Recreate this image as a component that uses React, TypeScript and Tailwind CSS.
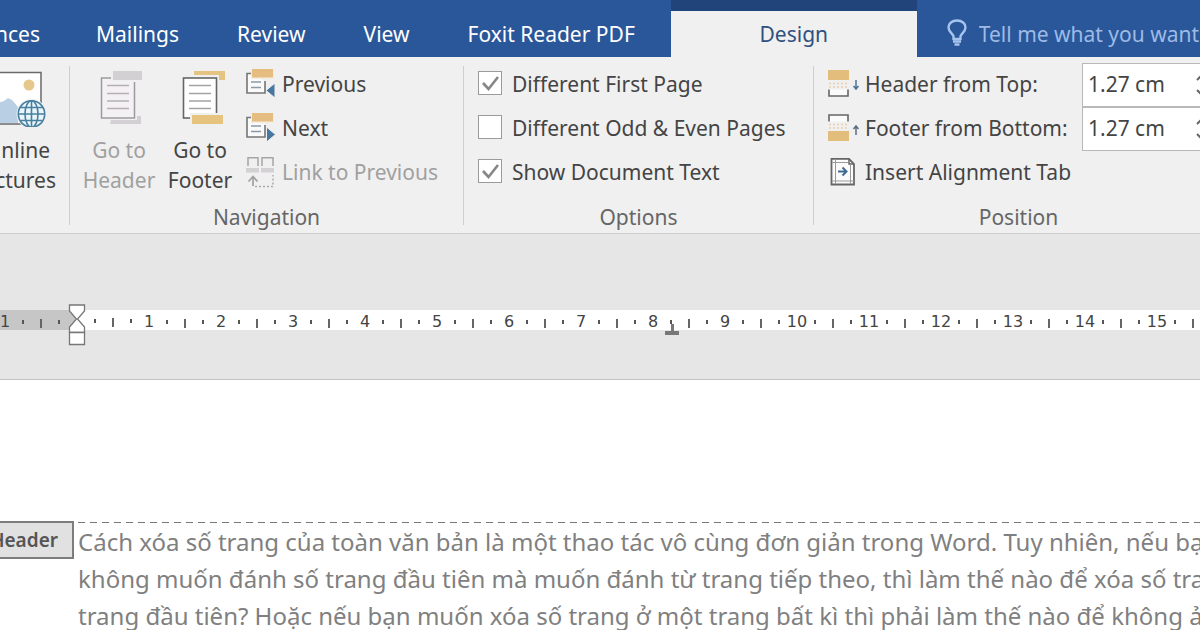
import React, { useState } from 'react';

const TABS = ['nces', 'Mailings', 'Review', 'View', 'Foxit Reader PDF'];

// Ruler numbers from left to right; null is the spot of the indent marker
const RULER_MARKS: (number | null)[] = [1, null, 1, 2, 3, 4, 5, 6, 7, 8, 9, 10, 11, 12, 13, 14, 15];

const BODY_LINES = [
  'Cách xóa số trang của toàn văn bản là một thao tác vô cùng đơn giản trong Word. Tuy nhiên, nếu bạ',
  'không muốn đánh số trang đầu tiên mà muốn đánh từ trang tiếp theo, thì làm thế nào để xóa số tra',
  'trang đầu tiên? Hoặc nếu bạn muốn xóa số trang ở một trang bất kì thì phải làm thế nào để không ả',
];

function OnlinePicturesIcon() {
  return (
    <svg width="46" height="60" viewBox="0 0 46 60" fill="none" aria-hidden="true">
      <path d="M-2 5.5H41V57H-2Z" fill="#fff" stroke="#6a6a6a" strokeWidth="1.5" />
      <circle cx="29" cy="18" r="5.5" fill="#e6c78c" />
      <path d="M-2 36L4 34L8 31L12 33L18 40V56H-2Z" fill="#b9cfe4" />
      <circle cx="31.5" cy="47" r="15" fill="#f0f0f0" />
      <g stroke="#47809f" strokeWidth="1.6">
        <circle cx="31.5" cy="47" r="13.2" fill="#e9f5fb" />
        <ellipse cx="31.5" cy="47" rx="6.5" ry="13.2" />
        <path d="M18.3 47H44.7M31.5 33.8V60M20.5 40.5H42.5M20.5 53.5H42.5" />
      </g>
    </svg>
  );
}

function GoToHeaderIcon() {
  return (
    <svg width="42" height="60" viewBox="0 0 42 60" fill="none" className="ml-1" aria-hidden="true">
      <path d="M11 53H37V49H41V57H10Z" fill="#d2d0d2" />
      <rect x="1.5" y="11" width="33" height="40" fill="#f4f1f5" stroke="#9c9a9d" strokeWidth="1.5" />
      <path d="M7 18.5H29M7 26.5H29M7 34H29M7 41.5H29" stroke="#b3b0b4" strokeWidth="1.5" />
      <rect x="11" y="2" width="33" height="13" fill="#f0f0f0" />
      <rect x="13" y="4" width="29" height="9" fill="#d2d0d2" />
    </svg>
  );
}

function GoToFooterIcon() {
  return (
    <svg width="44" height="60" viewBox="0 0 44 60" fill="none" className="ml-2" aria-hidden="true">
      <path d="M12 4H43V13H37V8H12Z" fill="#e3c482" />
      <rect x="1.5" y="11" width="33" height="40" fill="#fff" stroke="#666" strokeWidth="1.6" />
      <path d="M7 18.5H29M7 26.5H29M7 34H29M7 41.5H29" stroke="#a3a3a3" strokeWidth="1.5" />
      <rect x="8" y="46" width="34" height="13" fill="#f0f0f0" />
      <rect x="10" y="48" width="31" height="9" fill="#e6c37f" />
    </svg>
  );
}

function StepIcon({ direction }: { direction: 'previous' | 'next' }) {
  return (
    <svg width="30" height="32" viewBox="0 0 30 32" fill="none" aria-hidden="true">
      <path d="M5 4.5H1V24H19V12" fill="#fafafa" stroke="#757575" strokeWidth="1.6" />
      <path d="M5 13H15M5 18.5H15" stroke="#8c9aa8" strokeWidth="1.5" />
      <rect x="5" y="-1" width="23" height="11" fill="#f3ece0" />
      <rect x="6" y="0" width="21" height="8.5" fill="#e5bd80" />
      {direction === 'previous' ? (
        <path d="M29 14V29L20 21.5Z" fill="#48779f" stroke="#f0f0f0" />
      ) : (
        <path d="M20.5 14V29L29.5 21.5Z" fill="#48779f" stroke="#f0f0f0" />
      )}
    </svg>
  );
}

function LinkIcon() {
  return (
    <svg width="30" height="32" viewBox="0 0 30 32" fill="none" aria-hidden="true">
      <path d="M2 9V0.8H12V9M16 9V0.8H27V9" stroke="#a5a5a5" strokeWidth="1.5" />
      <path d="M0 11H13V15.5H0ZM15 11H28V15.5H15Z" fill="#d3d1d3" />
      <path d="M7 29V20M2.5 24.5L7 19.5L11.5 24.5" stroke="#a0a0a0" strokeWidth="1.7" />
      <path d="M9 29.5H27V18" stroke="#aaa" strokeWidth="1.5" strokeDasharray="2 2" />
    </svg>
  );
}

function EdgeIcon({ edge }: { edge: 'top' | 'bottom' }) {
  return (
    <svg width="32" height="30" viewBox="0 0 32 30" fill="none" aria-hidden="true">
      {edge === 'top' ? (
        <>
          <rect y="0" width="21" height="10" fill="#e2bd7c" />
          <path d="M1 13.5H21M1 17H21" stroke="#ebcfae" strokeWidth="1.5" strokeDasharray="2 2" />
          <path d="M1 19.5V26H20V19.5" fill="#fafafa" stroke="#666" strokeWidth="1.6" />
          <path d="M28 10V19M25.5 16L28 19L30.5 16" stroke="#4d7495" strokeWidth="1.5" />
        </>
      ) : (
        <>
          <path d="M1 7.5V1H20V7.5" fill="#fafafa" stroke="#666" strokeWidth="1.6" />
          <path d="M1 10.5H21M1 14H21" stroke="#ebcfae" strokeWidth="1.5" strokeDasharray="2 2" />
          <rect y="17" width="21" height="10" fill="#e2bd7c" />
          <path d="M28 21V12M25.5 15L28 12L30.5 15" stroke="#5c6f80" strokeWidth="1.5" />
        </>
      )}
    </svg>
  );
}

function AlignmentTabIcon() {
  return (
    <svg width="32" height="30" viewBox="0 0 32 30" fill="none" aria-hidden="true">
      <path d="M3.5 0.9H21L26 6V26.5H3.5Z" fill="#fbfbfb" stroke="#666" strokeWidth="1.8" />
      <path d="M21 1V6H26" stroke="#666" strokeWidth="1.5" />
      <path d="M7.5 1V26M22.5 7V26M4 4.5H20M4 23H26" stroke="#999" strokeWidth="1" />
      <path d="M10 13.5H18M14.5 9.5L18.5 13.5L14.5 17.5" stroke="#416c92" strokeWidth="2" />
    </svg>
  );
}

function BulbIcon() {
  return (
    <svg width="20" height="28" viewBox="0 0 20 28" fill="none" stroke="#a6c4ee" strokeWidth="2.4" aria-hidden="true">
      <path d="M6.5 20V17.5C6.5 15 1.5 13 1.5 8.5C1.5 4.5 5 1.5 10 1.5S18.5 4.5 18.5 8.5C18.5 13 13.5 15 13.5 17.5V20Z" />
      <path d="M6 22.5H14M7.5 25.5H12.5" />
    </svg>
  );
}

function Group({ label, className, children }: { label: string; className: string; children: React.ReactNode }) {
  return (
    <section aria-label={label || 'Insert'} className={`flex shrink-0 flex-col ${className}`}>
      <div className="flex h-[132px]">{children}</div>
      <div className="mt-2 text-center leading-7 text-[#666]">{label}</div>
    </section>
  );
}

function Separator() {
  return <div className="mb-[6px] mt-[3px] w-px shrink-0 bg-[#cfcfcf]" />;
}

function CheckOption({ label, initial }: { label: string; initial: boolean }) {
  const [checked, setChecked] = useState(initial);

  return (
    <label className="flex h-11 items-center gap-[10px] whitespace-nowrap">
      <span className="relative mb-1 flex">
        <input
          type="checkbox"
          checked={checked}
          onChange={(e) => setChecked(e.target.checked)}
          className="size-6 appearance-none border border-[#9b9b9b] bg-white"
        />
        {checked && (
          <svg viewBox="0 0 24 24" className="pointer-events-none absolute inset-0 size-6" fill="none" aria-hidden="true">
            <path d="M5 12L10.5 18L20 6" stroke="#868686" strokeWidth="2.6" />
          </svg>
        )}
      </span>
      {label}
    </label>
  );
}

function DistanceField({ id, label, edge }: { id: string; label: string; edge: 'top' | 'bottom' }) {
  const [value, setValue] = useState('1.27 cm');

  return (
    <div className="flex h-11 items-center">
      <label htmlFor={id} className="flex w-[254px] items-center gap-[5px] whitespace-nowrap">
        <EdgeIcon edge={edge} />
        {label}
      </label>
      <div className="flex h-11 w-[140px] items-center border border-[#b8b8b8] bg-white">
        <input
          id={id}
          value={value}
          onChange={(e) => setValue(e.target.value)}
          className="w-[112px] bg-transparent pl-[5px] outline-none"
        />
        <button type="button" aria-label="Change distance">
          <svg width="14" height="24" viewBox="0 0 14 24" fill="none" stroke="#666" strokeWidth="2" aria-hidden="true">
            <path d="M2 7L7 2L12 7M2 17L7 22L12 17" />
          </svg>
        </button>
      </div>
    </div>
  );
}

function TitleTabs() {
  return (
    <nav className="flex h-[57px] overflow-hidden bg-[#2a579a] text-[21px] text-white">
      <div className="flex pt-3">
        {TABS.map((tab) => (
          <button
            key={tab}
            type="button"
            className="flex shrink-0 items-center justify-end whitespace-nowrap px-[29px] first:w-[67px] first:pl-0 first:pr-[27px] last:pr-9"
          >
            {tab}
          </button>
        ))}
      </div>
      <div className="flex w-[246px] shrink-0 border-t-[11px] border-[#21457b] bg-[#f0f0f0]">
        <button type="button" className="flex-1 pt-px text-[#2f5180]">
          Design
        </button>
      </div>
      <label className="flex flex-1 items-center gap-3 overflow-hidden pl-[30px] pt-3">
        <span className="mb-1 shrink-0">
          <BulbIcon />
        </span>
        <input
          aria-label="Tell me"
          placeholder="Tell me what you want"
          className="w-60 shrink-0 bg-transparent outline-none placeholder:text-[#9dbbe6]"
        />
      </label>
    </nav>
  );
}

function Ribbon() {
  return (
    <div className="flex overflow-hidden border-b border-[#cdcdcd] bg-[#f0f0f0] pb-[2px] pt-[6px] text-[21px] text-[#444]">
      <Group label="" className="w-[69px]">
        <button type="button" className="flex flex-col items-start gap-2 pt-1">
          <OnlinePicturesIcon />
          <span className="flex w-[56px] flex-col items-end leading-[30px]">
            <span className="pr-[6px]">nline</span>
            <span>ctures</span>
          </span>
        </button>
      </Group>
      <Separator />
      <Group label="Navigation" className="w-[393px]">
        <button type="button" disabled className="flex w-[98px] flex-col items-center gap-2 pt-1 leading-[30px] text-[#a0a0a0]">
          <GoToHeaderIcon />
          <span>
            Go to
            <br />
            Header
          </span>
        </button>
        <button type="button" className="flex w-[64px] flex-col items-center gap-2 pt-1 leading-[30px]">
          <GoToFooterIcon />
          <span>
            Go to
            <br />
            Footer
          </span>
        </button>
        <div className="ml-[14px] flex flex-col whitespace-nowrap">
          <button type="button" className="flex h-11 items-center gap-[6px]">
            <StepIcon direction="previous" />
            Previous
          </button>
          <button type="button" className="flex h-11 items-center gap-[6px]">
            <StepIcon direction="next" />
            Next
          </button>
          <button type="button" disabled className="flex h-11 items-center gap-[6px] text-[#a0a0a0]">
            <LinkIcon />
            Link to Previous
          </button>
        </div>
      </Group>
      <Separator />
      <Group label="Options" className="w-[349px]">
        <div className="ml-[14px] flex flex-col">
          <CheckOption label="Different First Page" initial />
          <CheckOption label="Different Odd & Even Pages" initial={false} />
          <CheckOption label="Show Document Text" initial />
        </div>
      </Group>
      <Separator />
      <Group label="Position" className="w-[409px]">
        <div className="ml-[14px] flex flex-col">
          <DistanceField id="header-top" label="Header from Top:" edge="top" />
          <DistanceField id="footer-bottom" label="Footer from Bottom:" edge="bottom" />
          <button type="button" className="flex h-11 items-center gap-[5px] whitespace-nowrap">
            <AlignmentTabIcon />
            Insert Alignment Tab
          </button>
        </div>
      </Group>
    </div>
  );
}

function IndentMarker() {
  return (
    <svg
      width="18"
      height="42"
      viewBox="0 0 18 42"
      className="absolute -top-[6px] left-0 z-10"
      fill="#fff"
      stroke="#777"
      strokeWidth="1.3"
      aria-hidden="true"
    >
      <path d="M1.5 1H16.5V7L9.5 15L16.5 23V28.5H1.5V23L8.5 15L1.5 7Z" />
      <path d="M1.5 28.5H16.5V40.5H1.5Z" />
    </svg>
  );
}

function Ruler() {
  return (
    <div className="overflow-hidden border-b border-[#c4c4c4] bg-[#e6e6e6] pb-[49px] pt-[76px]">
      <div className="bg-[linear-gradient(to_right,#c6c6c6_77px,#ffffff_77px)]">
        <div className="-ml-1 flex h-5 font-['DejaVu_Sans',sans-serif] text-[16px] text-[#444]">
          {RULER_MARKS.map((mark, i) => (
            <div key={i} className="relative grid w-[72px] shrink-0 grid-cols-4 place-items-center">
              {mark === null ? <IndentMarker /> : null}
              <span className="pt-0.5 leading-5">{mark}</span>
              <span className="mt-0.5 h-[4px] w-[2px] bg-[#555]" />
              <span className="mt-1 h-[9px] w-[2px] bg-[#666]" />
              <span className="mt-0.5 h-[4px] w-[2px] bg-[#555]" />
              {mark === 8 && (
                <svg width="14" height="13" viewBox="0 0 14 13" className="absolute left-[21px] top-[12px]" aria-hidden="true">
                  <path d="M6 2H9V9H14V13H0V9H6Z" fill="#777" />
                </svg>
              )}
            </div>
          ))}
        </div>
      </div>
    </div>
  );
}

function DocumentPage() {
  return (
    <main className="flex items-start overflow-hidden bg-white pt-[141px]">
      <div className="flex h-[38px] w-[74px] shrink-0 items-center justify-end overflow-hidden border-2 border-l-0 border-[#7d7d7d] bg-[#e1e1e1] pr-[14px] text-[19px] font-semibold text-[#555]">
        Header
      </div>
      <div className="ml-1 min-w-0 flex-1 border-t border-transparent">
        <div className="h-px bg-[repeating-linear-gradient(to_right,#777777_0px,#777777_7px,transparent_7px,transparent_12px)]" />
        <div className="text-[24px] leading-[37px] text-[#808080]">
          {BODY_LINES.map((line) => (
            <p key={line} className="whitespace-nowrap">
              {line}
            </p>
          ))}
        </div>
      </div>
    </main>
  );
}

export default function App() {
  return (
    <div className="max-h-screen min-h-screen overflow-hidden bg-white font-['Noto_Sans','Open_Sans',sans-serif]">
      <TitleTabs />
      <Ribbon />
      <Ruler />
      <DocumentPage />
    </div>
  );
}
